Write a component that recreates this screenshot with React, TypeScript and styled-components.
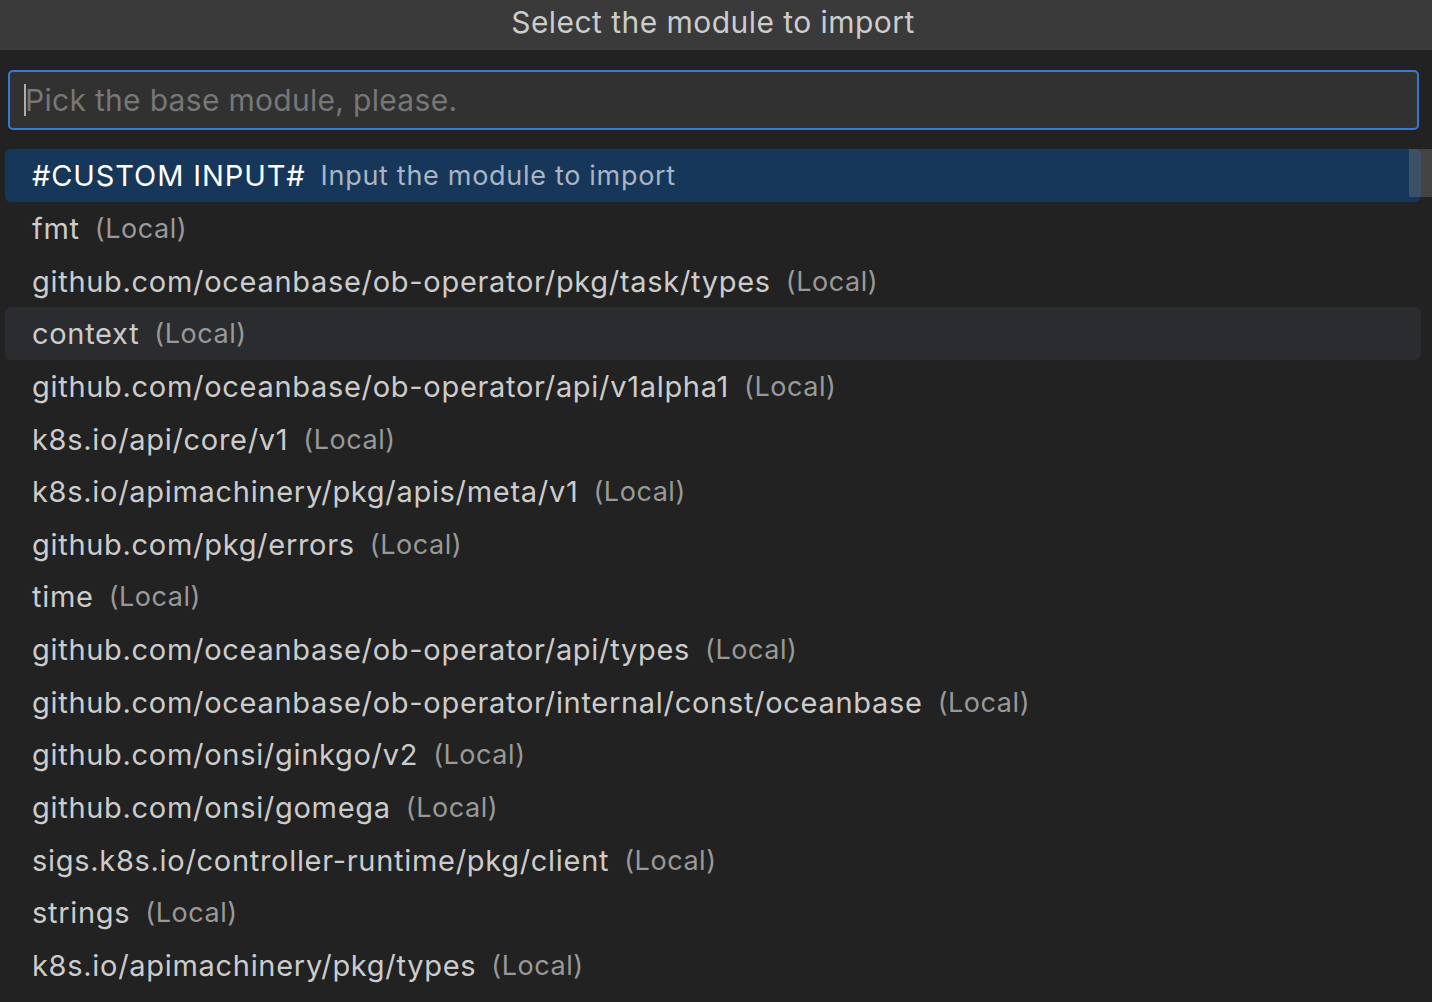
import React from "react";
import styled, { createGlobalStyle } from "styled-components";

const Global = createGlobalStyle`
  html, body { margin: 0; padding: 0; background: #222222; }
  body { font-family: Inter, "Noto Sans", sans-serif; -webkit-font-smoothing: antialiased; }
  #root { height: 1002px; overflow: hidden; }
`;

const Widget = styled.div`
  width: 1432px;
  height: 1002px;
  background: #222222;
  display: flex;
  flex-direction: column;
  overflow: hidden;
`;

const TitleBar = styled.div`
  height: 50px;
  flex: 0 0 50px;
  background: #3a3a3a;
  color: #cccccc;
  font-size: 30px;
  letter-spacing: 0.45px;
  display: flex;
  align-items: center;
  justify-content: center;
  padding: 0 6px 6px 0;
  box-sizing: border-box;
`;

const InputWrap = styled.div`
  padding: 20px 13px 0 8px;
`;

const InputBox = styled.div`
  height: 60px;
  box-sizing: border-box;
  border: 2px solid #3a79d3;
  border-radius: 5px;
  background: #313131;
  display: flex;
  align-items: center;
  padding-left: 14px;
`;

const Caret = styled.span`
  width: 2px;
  height: 32px;
  background: #aeaeae;
`;

const Placeholder = styled.span`
  color: #777777;
  font-size: 30px;
  letter-spacing: 0.3px;
  margin-left: -1px;
`;

const List = styled.div`
  position: relative;
  margin-top: 19px;
  padding: 0 11px 0 5px;
  display: flex;
  flex-direction: column;
`;

const Row = styled.div<{ $state?: "selected" | "hover" }>`
  height: 52.65px;
  flex: 0 0 52.65px;
  box-sizing: border-box;
  border-radius: 6px;
  display: flex;
  align-items: center;
  padding-left: 27px;
  padding-top: 1px;
  white-space: nowrap;
  background: ${(p) =>
    p.$state === "selected" ? "#17375a" : p.$state === "hover" ? "#2b2c2f" : "transparent"};
`;

const Label = styled.span<{ $selected?: boolean }>`
  font-size: 29px;
  letter-spacing: ${(p) => (p.$selected ? "0.9px" : "0.7px")};
  color: ${(p) => (p.$selected ? "#ffffff" : "#cccccc")};
`;

const Desc = styled.span<{ $selected?: boolean }>`
  font-size: 27px;
  letter-spacing: ${(p) => (p.$selected ? "0.7px" : "0.55px")};
  margin-left: 15px;
  color: ${(p) => (p.$selected ? "#a9b5c4" : "#999999")};
`;

const ScrollThumb = styled.div`
  position: absolute;
  z-index: 2;
  top: 0;
  right: 0;
  width: 23px;
  height: 48px;
  background: rgba(121, 121, 121, 0.4);
`;

const items: string[] = [
  "fmt",
  "github.com/oceanbase/ob-operator/pkg/task/types",
  "context",
  "github.com/oceanbase/ob-operator/api/v1alpha1",
  "k8s.io/api/core/v1",
  "k8s.io/apimachinery/pkg/apis/meta/v1",
  "github.com/pkg/errors",
  "time",
  "github.com/oceanbase/ob-operator/api/types",
  "github.com/oceanbase/ob-operator/internal/const/oceanbase",
  "github.com/onsi/ginkgo/v2",
  "github.com/onsi/gomega",
  "sigs.k8s.io/controller-runtime/pkg/client",
  "strings",
  "k8s.io/apimachinery/pkg/types",
];

export default function App() {
  return (
    <Widget>
      <Global />
      <TitleBar>Select the module to import</TitleBar>
      <InputWrap>
        <InputBox>
          <Caret />
          <Placeholder>Pick the base module, please.</Placeholder>
        </InputBox>
      </InputWrap>
      <List>
        <Row $state="selected">
          <Label $selected>#CUSTOM INPUT#</Label>
          <Desc $selected>Input the module to import</Desc>
        </Row>
        {items.map((it) => (
          <Row key={it} $state={it === "context" ? "hover" : undefined}>
            <Label>{it}</Label>
            <Desc>(Local)</Desc>
          </Row>
        ))}
        <ScrollThumb />
      </List>
    </Widget>
  );
}
